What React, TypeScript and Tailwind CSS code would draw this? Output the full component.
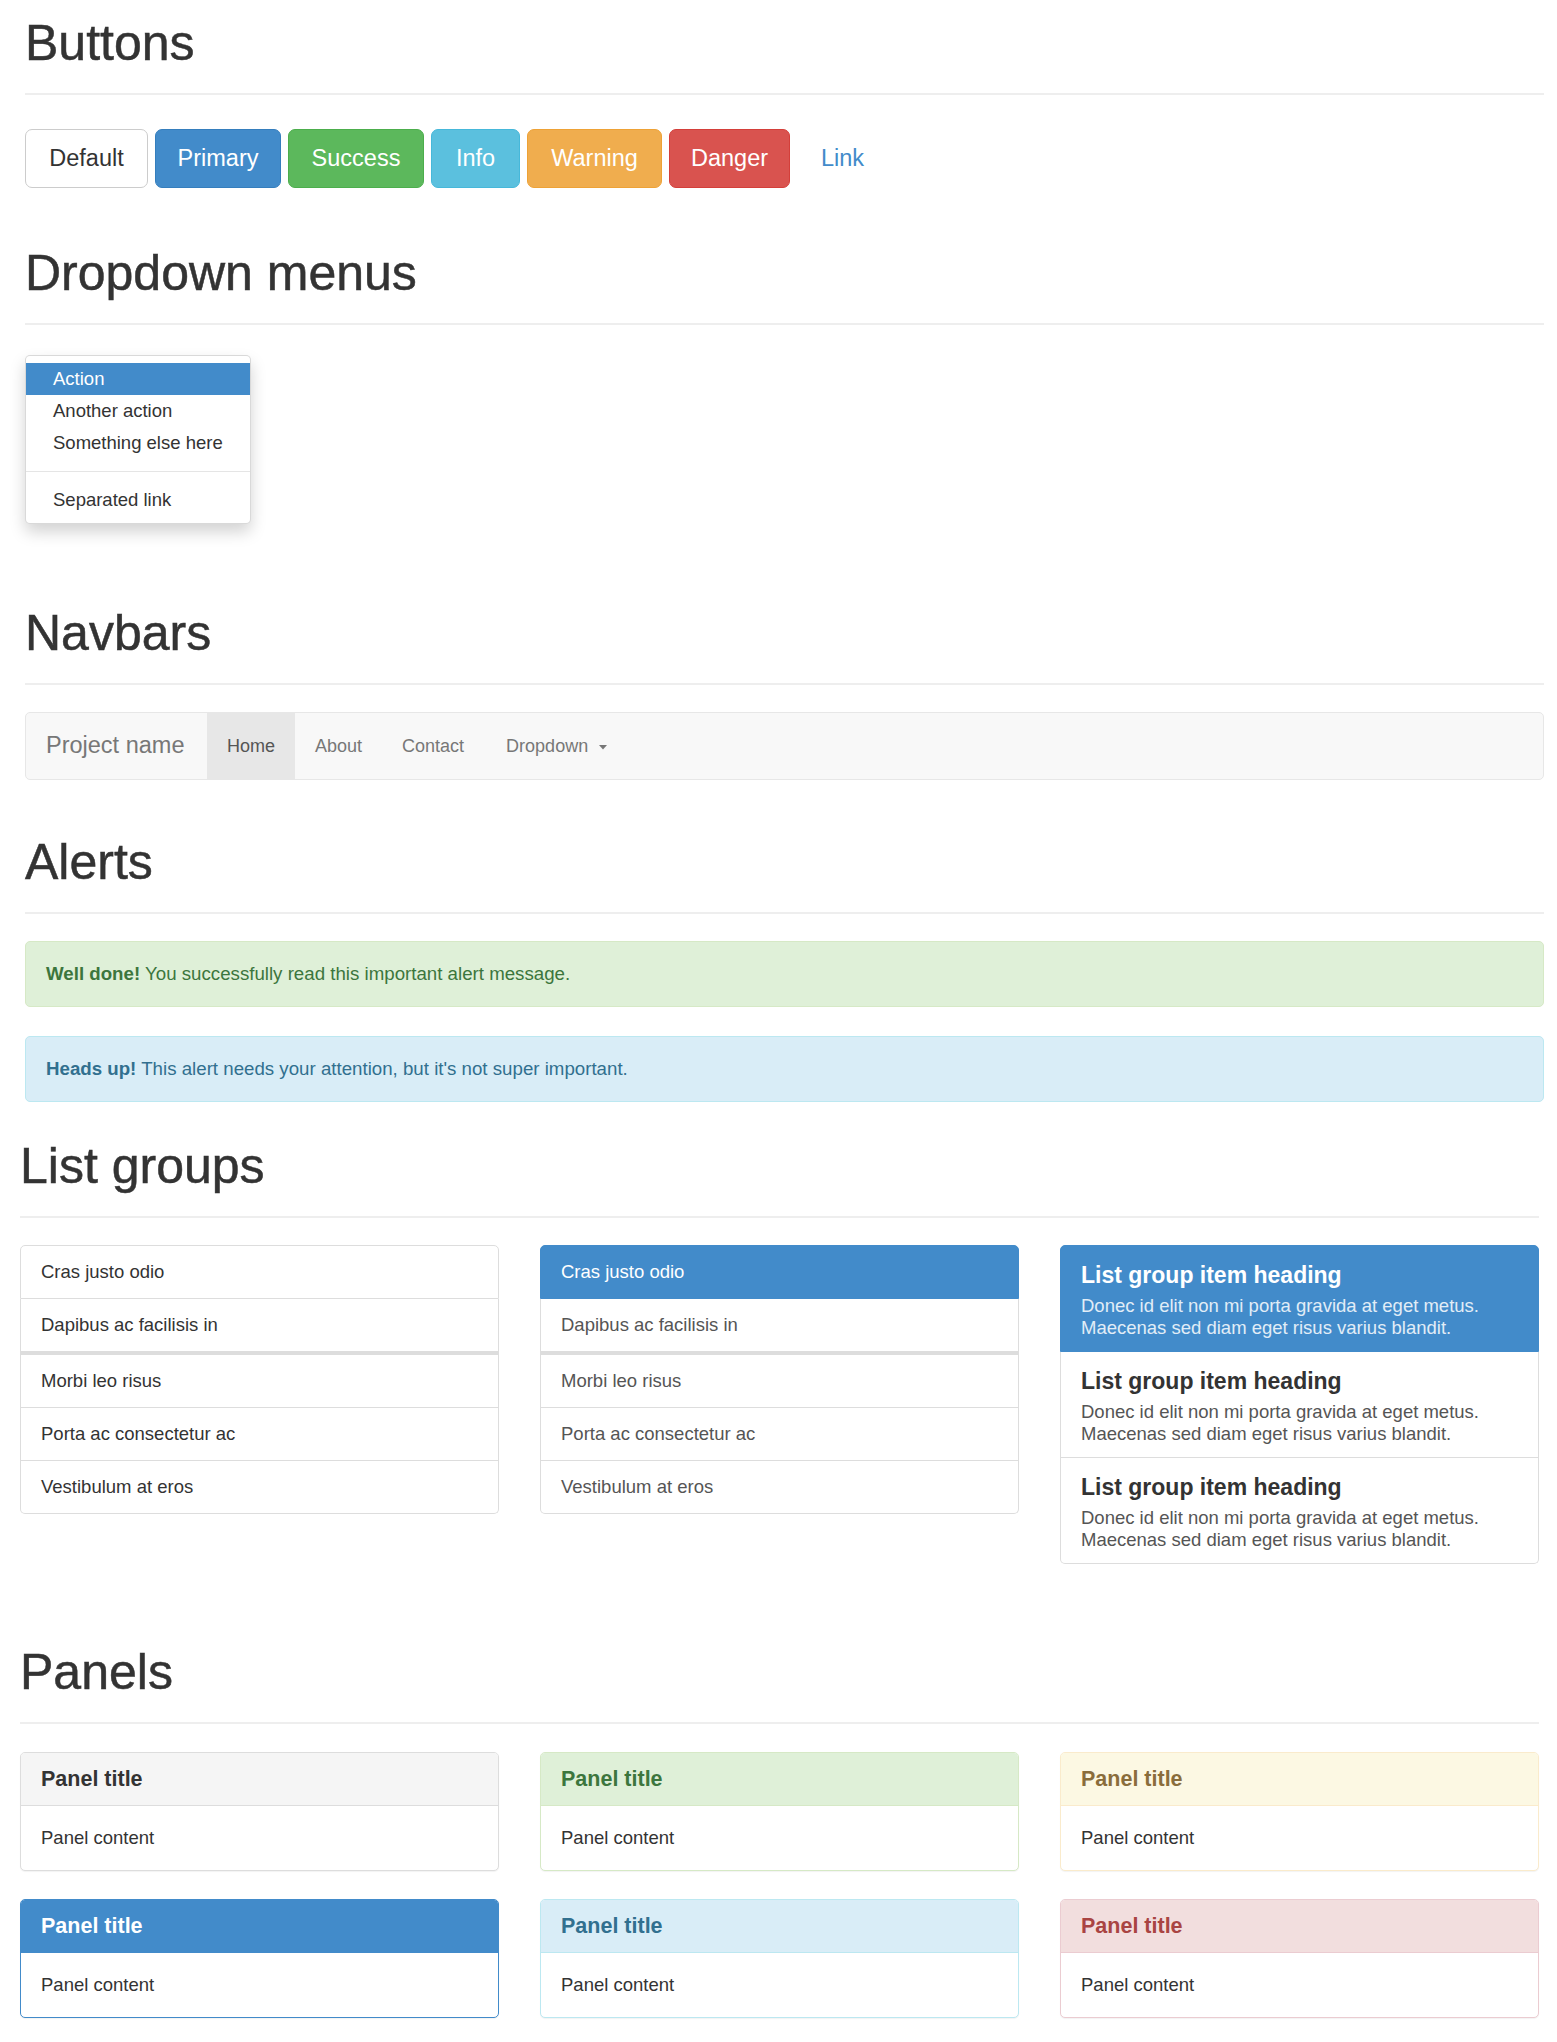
const buttons = [
  { label: 'Default', cls: 'w-[123px] bg-white border-[#cccccc] text-[#333333]' },
  { label: 'Primary', cls: 'w-[126px] bg-[#428bca] border-[#357ebd] text-white' },
  { label: 'Success', cls: 'w-[136px] bg-[#5cb85c] border-[#4cae4c] text-white' },
  { label: 'Info', cls: 'w-[89px] bg-[#5bc0de] border-[#46b8da] text-white' },
  { label: 'Warning', cls: 'w-[135px] bg-[#f0ad4e] border-[#eea236] text-white' },
  { label: 'Danger', cls: 'w-[121px] bg-[#d9534f] border-[#d43f3a] text-white' },
];

const listItems = [
  'Cras justo odio',
  'Dapibus ac facilisis in',
  'Morbi leo risus',
  'Porta ac consectetur ac',
  'Vestibulum at eros',
];

const panels = [
  [
    { box: 'border-[#dddddd]', head: 'bg-[#f5f5f5] border-[#dddddd] text-[#333333]' },
    { box: 'border-[#428bca]', head: 'bg-[#428bca] border-[#428bca] text-white' },
  ],
  [
    { box: 'border-[#d6e9c6]', head: 'bg-[#dff0d8] border-[#d6e9c6] text-[#3c763d]' },
    { box: 'border-[#bce8f1]', head: 'bg-[#d9edf7] border-[#bce8f1] text-[#31708f]' },
  ],
  [
    { box: 'border-[#faebcc]', head: 'bg-[#fcf8e3] border-[#faebcc] text-[#8a6d3b]' },
    { box: 'border-[#ebccd1]', head: 'bg-[#f2dede] border-[#ebccd1] text-[#a94442]' },
  ],
];

function PageHeader({ title, className }: { title: string; className: string }) {
  return (
    <div className={className}>
      <h1 className="text-[50px] leading-[55px] text-[#333333] [-webkit-text-stroke:0.5px_#333333]">{title}</h1>
      <div className="mt-[22px] h-[2px] bg-[#eeeeee]" />
    </div>
  );
}

function SimpleList({ active }: { active?: boolean }) {
  return (
    <div className="flex flex-col">
      {listItems.map((item, i) => {
        const first = i === 0;
        const last = i === listItems.length - 1;
        const isActive = active && first;
        return (
          <div
            key={item}
            className={
              'px-[20px] py-[13px] leading-[26px] border-x ' +
              (first ? 'border-t rounded-t-[5px] ' : '') +
              (last ? 'rounded-b-[5px] ' : '') +
              (i === 1 ? 'border-b-[4px] ' : 'border-b ') +
              (isActive
                ? 'bg-[#428bca] border-[#428bca] text-white'
                : 'bg-white border-[#dddddd] ' + (active ? 'text-[#555555]' : 'text-[#333333]'))
            }
          >
            {item}
          </div>
        );
      })}
    </div>
  );
}

function HeadingList() {
  return (
    <div className="flex flex-col">
      {[0, 1, 2].map((i) => {
        const isActive = i === 0;
        return (
          <div
            key={i}
            className={
              'px-[20px] pt-[15px] pb-[12px] border-x border-b ' +
              (i === 0 ? 'border-t rounded-t-[5px] ' : '') +
              (i === 2 ? 'rounded-b-[5px] ' : '') +
              (isActive ? 'bg-[#428bca] border-[#428bca]' : 'bg-white border-[#dddddd]')
            }
          >
            <h4
              className={
                'text-[23px] leading-[28px] font-bold ' + (isActive ? 'text-white' : 'text-[#333333]')
              }
            >
              List group item heading
            </h4>
            <p className={'mt-[6px] leading-[22px] ' + (isActive ? 'text-[#e1edf7]' : 'text-[#555555]')}>
              Donec id elit non mi porta gravida at eget metus.
              <br />
              Maecenas sed diam eget risus varius blandit.
            </p>
          </div>
        );
      })}
    </div>
  );
}

function Panel({ box, head }: { box: string; head: string }) {
  return (
    <div className={'rounded-[5px] border bg-white shadow-[0_1px_1px_rgba(0,0,0,0.05)] ' + box}>
      <div className={'rounded-t-[4px] border-b px-[20px] py-[13px] ' + head}>
        <h3 className="text-[21.5px] leading-[26px] font-bold">Panel title</h3>
      </div>
      <div className="px-[20px] py-[19px] leading-[26px] text-[#333333]">Panel content</div>
    </div>
  );
}

export default function App() {
  return (
    <div
      className="min-h-screen bg-white text-[18.5px] text-[#333333]"
      style={{ fontFamily: '"Liberation Sans", Arial, sans-serif' }}
    >
      <div className="pl-[25px] pr-[13px]">
        <PageHeader title="Buttons" className="pt-[16px]" />
        <div className="mt-[34px] flex items-center gap-[7px]">
          {buttons.map((b) => (
            <button
              key={b.label}
              className={'flex h-[59px] items-center justify-center rounded-[7px] border text-[23.5px] ' + b.cls}
            >
              {b.label}
            </button>
          ))}
          <button className="flex h-[59px] items-center px-[24px] text-[23.5px] text-[#428bca]">Link</button>
        </div>

        <PageHeader title="Dropdown menus" className="mt-[58px]" />
        <div className="mt-[30px] w-[226px] rounded-[5px] border border-[rgba(0,0,0,0.15)] bg-white py-[7px] shadow-[0_8px_16px_rgba(0,0,0,0.175)]">
          <div className="bg-[#428bca] px-[27px] py-[3px] leading-[26px] text-white">Action</div>
          <div className="px-[27px] py-[3px] leading-[26px]">Another action</div>
          <div className="px-[27px] py-[3px] leading-[26px]">Something else here</div>
          <div className="my-[12px] h-px bg-[#e5e5e5]" />
          <div className="px-[27px] py-[3px] leading-[26px]">Separated link</div>
        </div>

        <PageHeader title="Navbars" className="mt-[82px]" />
        <div className="mt-[27px] flex h-[68px] rounded-[5px] border border-[#e7e7e7] bg-[#f8f8f8]">
          <div className="flex w-[181px] items-center pl-[20px] text-[23.5px] text-[#777777]">Project name</div>
          <div className="flex items-center bg-[#e7e7e7] px-[20px] text-[18px] text-[#555555]">Home</div>
          <div className="flex items-center px-[20px] text-[18px] text-[#777777]">About</div>
          <div className="flex items-center px-[20px] text-[18px] text-[#777777]">Contact</div>
          <div className="flex items-center pl-[22px] pr-[20px] text-[18px] text-[#777777]">
            Dropdown
            <svg className="ml-[11px] mt-[2px]" width="8" height="5" viewBox="0 0 8 5">
              <path d="M0 0 L8 0 L4 4.5 Z" fill="#777777" />
            </svg>
          </div>
        </div>

        <PageHeader title="Alerts" className="mt-[55px]" />
        <div className="mt-[27px] rounded-[5px] border border-[#d6e9c6] bg-[#dff0d8] px-[20px] py-[19px] text-[18.7px] leading-[26px] text-[#3c763d]">
          <strong className="font-bold">Well done!</strong> You successfully read this important alert message.
        </div>
        <div className="mt-[29px] rounded-[5px] border border-[#bce8f1] bg-[#d9edf7] px-[20px] py-[19px] text-[18.7px] leading-[26px] text-[#31708f]">
          <strong className="font-bold">Heads up!</strong> This alert needs your attention, but it's not super important.
        </div>
      </div>

      <div className="pl-[20px] pr-[18px] pb-[24px]">
        <PageHeader title="List groups" className="mt-[37px]" />
        <div className="mt-[27px] grid grid-cols-3 items-start gap-x-[41px]">
          <SimpleList />
          <SimpleList active />
          <HeadingList />
        </div>

        <PageHeader title="Panels" className="mt-[81px]" />
        <div className="mt-[28px] grid grid-cols-3 items-start gap-x-[41px]">
          {panels.map((col, ci) => (
            <div key={ci} className="flex flex-col gap-[28px]">
              {col.map((p, pi) => (
                <Panel key={pi} box={p.box} head={p.head} />
              ))}
            </div>
          ))}
        </div>
      </div>
    </div>
  );
}
